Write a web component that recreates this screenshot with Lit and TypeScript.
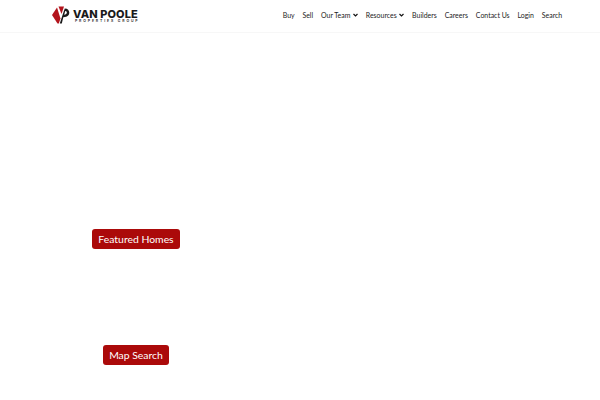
import { LitElement, html, css } from "lit";
import { customElement } from "lit/decorators.js";

const chevron = html`<svg class="chev" viewBox="0 0 10 7" width="5" height="4"><path d="M1 1.5 L5 5.2 L9 1.5" fill="none" stroke="#111" stroke-width="2.4"/></svg>`;

@customElement("app-root")
export class AppRoot extends LitElement {
  static styles = css`
    :host { display: block; width: 600px; height: 400px; background: #fff; overflow: hidden; font-family: Lato, sans-serif; }
    header { height: 33px; box-sizing: border-box; border-bottom: 1px solid #f7f7f7; padding: 0 37.8px 2px 52px; display: flex; align-items: center; justify-content: space-between; }
    .logo { display: flex; align-items: center; gap: 3px; }
    .logo-text { display: flex; flex-direction: column; align-items: flex-start; color: #1a1a1a; font-family: Inter, sans-serif; padding-top: 1px; }
    .name { font-size: 11px; font-weight: 800; line-height: 10px; letter-spacing: 0.1px; white-space: nowrap; }
    .sub { font-size: 3.5px; font-weight: 600; line-height: 4px; letter-spacing: 1.85px; white-space: nowrap; padding-left: 2px; }
    nav { display: flex; align-items: center; gap: 7.9px; font-size: 6.95px; color: #222; }
    nav a { display: flex; align-items: center; gap: 2.5px; white-space: nowrap; }
    .hero { width: 272px; display: flex; flex-direction: column; align-items: center; padding-top: 196px; gap: 96px; }
    .btn { background: #ab0a0a; color: #fff; border-radius: 3px; height: 20px; display: flex; align-items: center; justify-content: center; font-size: 10.4px; }
    .featured { width: 88px; }
    .map { width: 66px; }
  `;
  render() {
    return html`
      <header>
        <div class="logo">
          <svg width="18" height="18" viewBox="0 0 18 18">
            <path d="M0 9 L5 1.5 L8.5 12.5 L6.8 17.5 L5.5 17.5 Z" fill="#b3141c"/>
            <path d="M6.5 0.5 L12 0.5 L9.5 8 Z" fill="#b3141c"/>
            <path d="M11.5 6 L12.8 2.5 C18.5 2.5 19 10.5 13 11 L11.3 11.2 L9.8 17.5 L7.8 17.5 Z" fill="#1a1a1a"/>
            <path d="M13.2 5 C15.5 5 15.5 8.5 12.2 8.7 Z" fill="#fff"/>
          </svg>
          <div class="logo-text">
            <span class="name">VAN POOLE</span>
            <span class="sub">PROPERTIES GROUP</span>
          </div>
        </div>
        <nav>
          <a>Buy</a><a>Sell</a><a>Our Team ${chevron}</a><a>Resources ${chevron}</a><a>Builders</a><a>Careers</a><a>Contact Us</a><a>Login</a><a>Search</a>
        </nav>
      </header>
      <main class="hero">
        <div class="btn featured">Featured Homes</div>
        <div class="btn map">Map Search</div>
      </main>
    `;
  }
}
